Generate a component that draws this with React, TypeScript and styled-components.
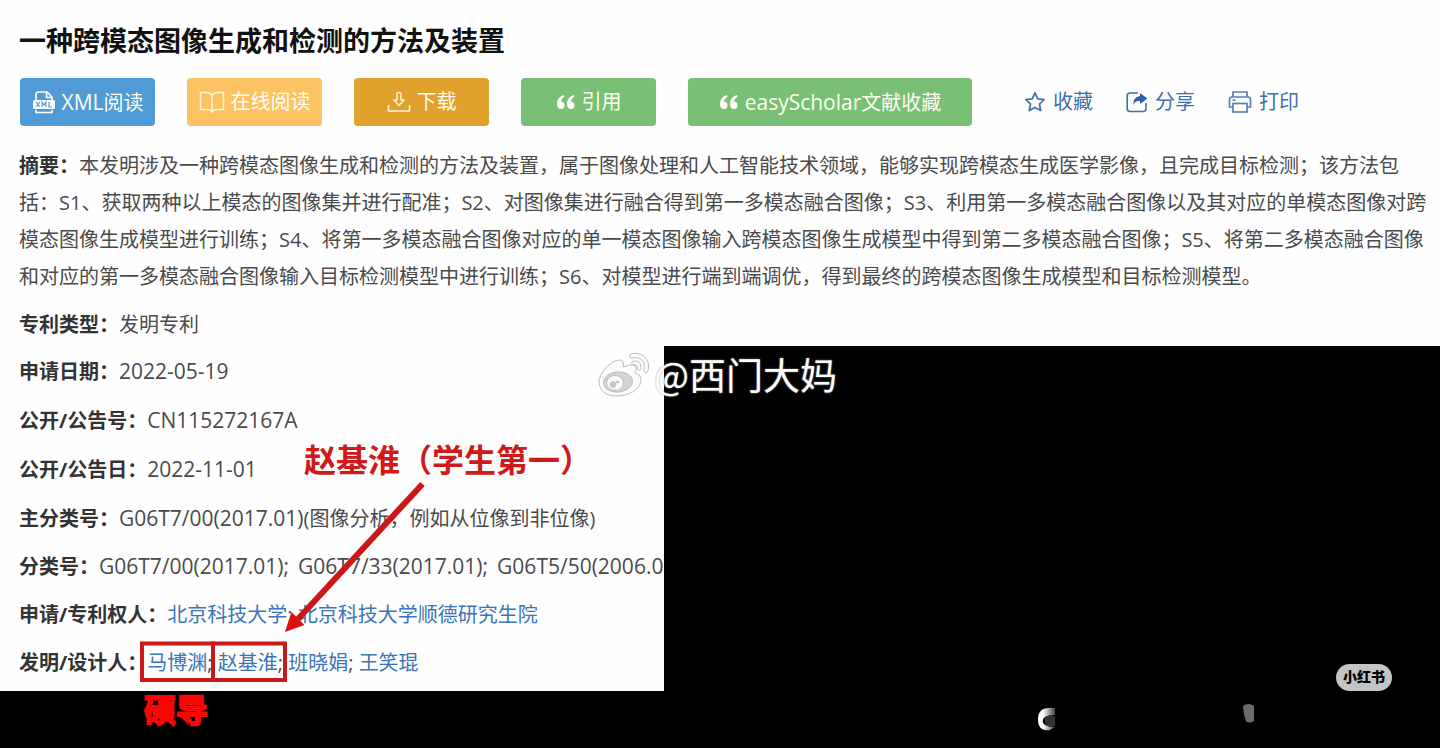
import React from "react";
import styled, { createGlobalStyle } from "styled-components";

const GlobalStyle = createGlobalStyle`
  *, *::before, *::after { box-sizing: border-box; }
  body {
    margin: 0;
    background: #000;
    font-family: "Open Sans", "Noto Sans CJK SC", sans-serif;
    font-size: 20px;
    color: #4a4a4a;
    text-spacing-trim: space-all;
  }
`;

const Page = styled.main`
  position: relative;
  min-height: 100vh;
  background: #000;
  overflow: hidden;
`;

const Summary = styled.section`
  padding: 22px 4px 0 19px;
  background: #fefefe;
`;

const Title = styled.h1`
  margin: 0;
  font-size: 27px;
  line-height: 38px;
  font-weight: 700;
  color: #111;
`;

const Toolbar = styled.div`
  display: flex;
  align-items: center;
  gap: 32px;
  margin-top: 18px;
  padding-left: 1px;
`;

const ToolButton = styled.button<{ $bg: string; $wide?: boolean }>`
  display: flex;
  align-items: center;
  justify-content: center;
  gap: 6px;
  flex: none;
  width: ${(p) => (p.$wide ? "284px" : "135px")};
  height: 48px;
  padding: 0;
  border: 0;
  border-radius: 4px;
  background: ${(p) => p.$bg};
  color: #fffdf4;
  font: inherit;
  line-height: 28px;
  white-space: nowrap;
  cursor: pointer;
`;

const Actions = styled.div`
  display: flex;
  gap: 33px;
  margin-left: 20px;
`;

const Action = styled.a`
  display: flex;
  align-items: center;
  gap: 7px;
  color: #3c6fae;
  line-height: 28px;
  text-decoration: none;
  white-space: nowrap;
`;

const Abstract = styled.p`
  margin: 21px 0 7px;
  line-height: 37px;
`;

const Label = styled.strong`
  font-weight: 700;
  color: #333;
`;

const Latin = styled.span`
  font-size: 21px;
`;

const RowBox = styled.div`
  display: flex;
  align-items: center;
  flex: 1;
  min-height: 44px;
  padding-top: 2px;
  line-height: 28px;
  white-space: nowrap;
`;

function Row({ children }: { children: React.ReactNode }) {
  return (
    <RowBox>
      <span>{children}</span>
    </RowBox>
  );
}

const Details = styled.section`
  display: flex;
  flex-direction: column;
  width: 664px;
  max-width: 100%;
  min-height: 345px;
  padding: 0 2px 5px 19px;
  background: #fefefe;
  overflow: hidden;
`;

const Codes = styled.span`
  display: inline-flex;
  gap: 9px;
  font-size: 21px;
`;

const NameLink = styled.a`
  color: #3c74b8;
  text-decoration: none;
`;

const Marks = styled.svg`
  position: absolute;
  left: 0;
  top: 0;
  width: 664px;
  height: 691px;
  pointer-events: none;
`;

const Note = styled.div<{ $x: number; $y: number; $heavy?: boolean }>`
  position: absolute;
  left: ${(p) => p.$x}px;
  top: ${(p) => p.$y}px;
  font-size: 32px;
  line-height: 40px;
  font-weight: 700;
  white-space: nowrap;
  color: ${(p) => (p.$heavy ? "#fb0505" : "#d01919")};
  -webkit-text-stroke: ${(p) => (p.$heavy ? "2px #fb0505" : "0")};
`;

const Watermark = styled.div`
  position: absolute;
  left: 597px;
  top: 348px;
  display: flex;
  align-items: center;
  gap: 3px;
  color: #fff;
  font-family: "Noto Sans CJK SC", sans-serif;
  font-size: 37px;
  line-height: 52px;
  white-space: nowrap;
  text-shadow: 0 0 2px #999;
`;

const Badge = styled.div`
  position: absolute;
  right: 48px;
  top: 664px;
  width: 56px;
  height: 27px;
  border-radius: 14px;
  background: #c4c4c4;
  color: #000;
  font-size: 14px;
  line-height: 26px;
  font-weight: 900;
  text-align: center;
`;

const Traces = styled.svg`
  position: absolute;
  right: 180px;
  top: 700px;
`;

function XmlIcon() {
  return (
    <svg width="24" height="24" viewBox="0 0 24 24" fill="none" stroke="#fff" strokeWidth="1.6">
      <path d="M4 10V4.5Q4 2 6.500 2H15l5 5v3M14.500 2v5.500H20" />
      <rect x="1" y="10" width="22" height="9" rx="1.500" fill="#fff" stroke="none" />
      <path d="M4 20v2.500h16V20" />
      <path d="M4 12l4 5M8 12l-4 5M10 17v-5l2 3 2-3v5M17 12v5h3" stroke="#509bd5" strokeWidth="1.2" />
    </svg>
  );
}

function BookIcon() {
  return (
    <svg width="26" height="22" viewBox="0 0 26 22" fill="none" stroke="#fff3cf" strokeWidth="1.5">
      <path d="M13 4Q11 1.500 7 1.500H1.500v17H8q3.500 0 5 2.500Q14.500 18.500 18 18.500h6.500v-17H19Q15 1.500 13 4zV21" />
    </svg>
  );
}

function DownloadIcon() {
  return (
    <svg width="24" height="22" viewBox="0 0 24 22" fill="none" stroke="#fff3cf" strokeWidth="1.600">
      <path d="M10 2.500Q12 .5 14 2.500V9h3l-5 5.500L7 9h3z" strokeLinejoin="round" />
      <path d="M1.500 14v6h21v-6" />
    </svg>
  );
}

function QuoteIcon() {
  return (
    <svg width="20" height="16" viewBox="0 0 20 16" fill="#fffdf4">
      <path d="M8 1Q1 3 1 10q0 5 4 5 3.500 0 3.500-3.800Q8.500 8 5 7.700 5.500 4.500 8.500 2.500z" />
      <path d="M18 1q-7 2-7 9 0 5 4 5 3.500 0 3.500-3.800 0-3.200-3.500-3.500.5-3.200 3.500-5.200z" />
    </svg>
  );
}

function StarIcon() {
  return (
    <svg width="22" height="22" viewBox="0 0 22 22" fill="none" stroke="#3c6fae" strokeWidth="1.700" strokeLinejoin="round">
      <path d="M11 1.800l2.800 6 6.400.8-4.700 4.400 1.200 6.500L11 16.400l-5.700 3.100 1.200-6.500L1.800 8.600l6.400-.8z" />
    </svg>
  );
}

function ShareIcon() {
  return (
    <svg width="22" height="22" viewBox="0 0 22 22" fill="none" stroke="#3c6fae" strokeWidth="1.600">
      <path d="M12 2H4Q1.200 2 1.200 5v12.500q0 3 2.800 3h13q3 0 3-3V12" />
      <path d="M14 2l7.500 5.500L14 13V10Q9 9.500 7 14 7 6 14 5z" fill="#2c62a8" stroke="none" />
    </svg>
  );
}

function PrintIcon() {
  return (
    <svg width="24" height="22" viewBox="0 0 24 22" fill="none" stroke="#5680b8" strokeWidth="1.700">
      <path d="M5 6V1h14v5M5 16H1.500V8.500Q1.500 6 4 6h16q2.500 0 2.500 2.500V16H19" />
      <rect x="5" y="12.500" width="14" height="8.500" />
      <path d="M4.500 9.200h3" />
    </svg>
  );
}

function WeiboIcon() {
  return (
    <svg width="54" height="46" viewBox="0 0 54 46" fill="#fbfbfb" stroke="#bdbdbd" strokeWidth="1" aria-hidden="true">
      <path d="M2 32C1 23 14 9 22 9q6 0 4 7 10-4 13 0 1 2-1 6 7 2 6 8c-1 9-13 15-24 15S3 40 2 32z" />
      <ellipse cx="21" cy="31" rx="14.500" ry="10" fill="#d4d4d4" transform="rotate(-6 21 31)" />
      <ellipse cx="18" cy="32" rx="8.500" ry="7.500" fill="#fafafa" />
      <circle cx="16" cy="33.500" r="2.800" fill="#c9c9c9" />
      <circle cx="20.500" cy="31" r="1" fill="#c9c9c9" />
      <path d="M34 3C45 0 54 8 51 20q-1 2.500-3 1.500-1.500-1-1-3C49 10 43 5 35 7q-2 0-2.500-1.500Q32.300 3.500 34 3z" />
      <path d="M36 10q9-1 8 8-1 2-3 1-1-1-.8-3 0-2.500-3.200-2.500-2 .2-2.300-1.300T36 10z" />
    </svg>
  );
}

export default function App() {
  return (
    <Page lang="zh-CN">
      <GlobalStyle />
      <Summary>
        <Title>一种跨模态图像生成和检测的方法及装置</Title>
        <Toolbar>
          <ToolButton $bg="#509bd5"><XmlIcon /><span><Latin>XML</Latin>阅读</span></ToolButton>
          <ToolButton $bg="#fbc361"><BookIcon />在线阅读</ToolButton>
          <ToolButton $bg="#e1a22d"><DownloadIcon />下载</ToolButton>
          <ToolButton $bg="#79bf76"><QuoteIcon />引用</ToolButton>
          <ToolButton $bg="#79bf76" $wide><QuoteIcon /><span><Latin>easyScholar</Latin>文献收藏</span></ToolButton>
          <Actions>
            <Action href="#favorite"><StarIcon />收藏</Action>
            <Action href="#share"><ShareIcon />分享</Action>
            <Action href="#print"><PrintIcon />打印</Action>
          </Actions>
        </Toolbar>
        <Abstract>
          <Label>摘要：</Label>本发明涉及一种跨模态图像生成和检测的方法及装置，属于图像处理和人工智能技术领域，能够实现跨模态生成医学影像，且完成目标检测；该方法包括：S1、获取两种以上模态的图像集并进行配准；S2、对图像集进行融合得到第一多模态融合图像；S3、利用第一多模态融合图像以及其对应的单模态图像对跨模态图像生成模型进行训练；S4、将第一多模态融合图像对应的单一模态图像输入跨模态图像生成模型中得到第二多模态融合图像；S5、将第二多模态融合图像和对应的第一多模态融合图像输入目标检测模型中进行训练；S6、对模型进行端到端调优，得到最终的跨模态图像生成模型和目标检测模型。
        </Abstract>
        <Row><Label>专利类型：</Label>发明专利</Row>
      </Summary>
      <Details>
        <Row><Label>申请日期：</Label><Latin>2022-05-19</Latin></Row>
        <Row><Label>公开/公告号：</Label><Latin>CN115272167A</Latin></Row>
        <Row><Label>公开/公告日：</Label><Latin>2022-11-01</Latin></Row>
        <Row><Label>主分类号：</Label><Latin>G06T7/00(2017.01)</Latin>(图像分析，例如从位像到非位像)</Row>
        <Row>
          <Label>分类号：</Label>
          <Codes><span>G06T7/00(2017.01);</span><span>G06T7/33(2017.01);</span><span>G06T5/50(2006.0</span></Codes>
        </Row>
        <Row>
          <Label>申请/专利权人：</Label>
          <NameLink href="#ustb">北京科技大学</NameLink>; <NameLink href="#shunde">北京科技大学顺德研究生院</NameLink>
        </Row>
        <Row>
          <Label>发明/设计人：</Label>
          <NameLink href="#ma">马博渊</NameLink>; <NameLink href="#zhao">赵基淮</NameLink>; <NameLink href="#ban">班晓娟</NameLink>; <NameLink href="#wang">王笑琨</NameLink>
        </Row>
      </Details>

      <Marks viewBox="0 0 664 691" fill="none" stroke="#cb1717" aria-hidden="true">
        <rect x="142" y="643.500" width="71" height="36.500" strokeWidth="4" />
        <rect x="213" y="643.500" width="72" height="36.500" strokeWidth="4" />
        <path d="M422.500 484L298 619" strokeWidth="6" />
        <path d="M285 632l6.500-20 13 13z" fill="#dd1010" stroke="none" />
      </Marks>
      <Note $x={304} $y={440}>赵基淮（学生第一）</Note>
      <Note $x={144} $y={690} $heavy>硕导</Note>
      <Watermark><WeiboIcon /><span>@西门大妈</span></Watermark>
      <Badge>小红书</Badge>
      <Traces width="224" height="36" viewBox="0 0 224 36" aria-hidden="true">
        <defs>
          <linearGradient id="fade" x1="0" x2="1">
            <stop offset="0.3" stopColor="#fff" />
            <stop offset="1" stopColor="#444" />
          </linearGradient>
        </defs>
        <path d="M19 8Q2 6 2 19t12 11l5-3q-9 0-12-4-2-8 12-8z" fill="url(#fade)" />
        <path d="M9 17q6-3 10 0v9q-8 2-10-3z" fill="#333" />
        <path d="M207 6q5-4 11 0v15q-5 3-8 0-3-8-3-15z" fill="#6c6c6c" />
      </Traces>
    </Page>
  );
}
